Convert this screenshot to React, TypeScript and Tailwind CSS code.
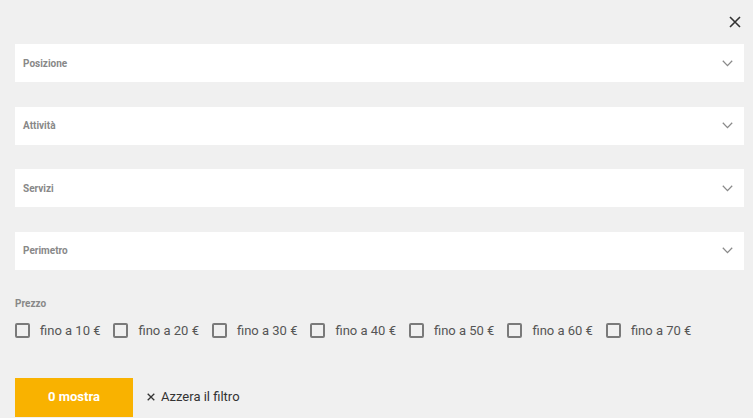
import React from "react";

const Chevron = () => (
  <svg width="11" height="7" viewBox="0 0 11 7" fill="none" className="shrink-0">
    <path d="M0.8 0.8 L5.5 5.6 L10.2 0.8" stroke="#8a8a8a" strokeWidth="1.3" />
  </svg>
);

const Select = ({ label }: { label: string }) => (
  <div className="flex h-[38px] items-center justify-between bg-white pl-[8px] pr-[11px]">
    <span className="text-[10px] font-bold text-[#888]" style={{ fontFamily: "Roboto, sans-serif" }}>
      {label}
    </span>
    <Chevron />
  </div>
);

const prices = [10, 20, 30, 40, 50, 60, 70];

export default function App() {
  return (
    <div
      className="flex h-[418px] w-[753px] flex-col overflow-hidden bg-[#f0f0f0] pl-[15px] pr-[9px]"
      style={{ fontFamily: "Roboto, 'Liberation Sans', sans-serif" }}
    >
      <div className="flex h-[44px] items-start justify-end pt-[16px] pr-[3px]">
        <svg width="12" height="12" viewBox="0 0 12 12" fill="none">
          <path d="M1 1 L11 11 M11 1 L1 11" stroke="#333" strokeWidth="1.6" />
        </svg>
      </div>
      <div className="flex flex-col gap-[24.5px]">
        <Select label="Posizione" />
        <Select label="Attività" />
        <Select label="Servizi" />
        <Select label="Perimetro" />
      </div>
      <div className="mt-[27px] text-[10px] font-bold leading-[14px] text-[#888]">Prezzo</div>
      <div className="mt-[12px] flex items-center">
        {prices.map((p) => (
          <label key={p} className="mr-[13px] flex items-center">
            <span className="h-[15px] w-[15px] rounded-[2px] border-2 border-[#7a7a7a]" />
            <span className="ml-[10px] text-[13px] leading-[15px] text-[#555]">fino a {p} €</span>
          </label>
        ))}
      </div>
      <div className="mt-[40px] flex items-center">
        <button className="flex h-[39px] w-[118px] items-center justify-center bg-[#f9b200] text-[13px] font-bold text-white">
          0 mostra
        </button>
        <span className="ml-[14px] flex items-center text-[13px] text-[#333]">
          <svg width="8" height="8" viewBox="0 0 8 8" fill="none" className="mr-[6px]">
            <path d="M0.7 0.7 L7.3 7.3 M7.3 0.7 L0.7 7.3" stroke="#333" strokeWidth="1.3" />
          </svg>
          Azzera il filtro
        </span>
      </div>
    </div>
  );
}
